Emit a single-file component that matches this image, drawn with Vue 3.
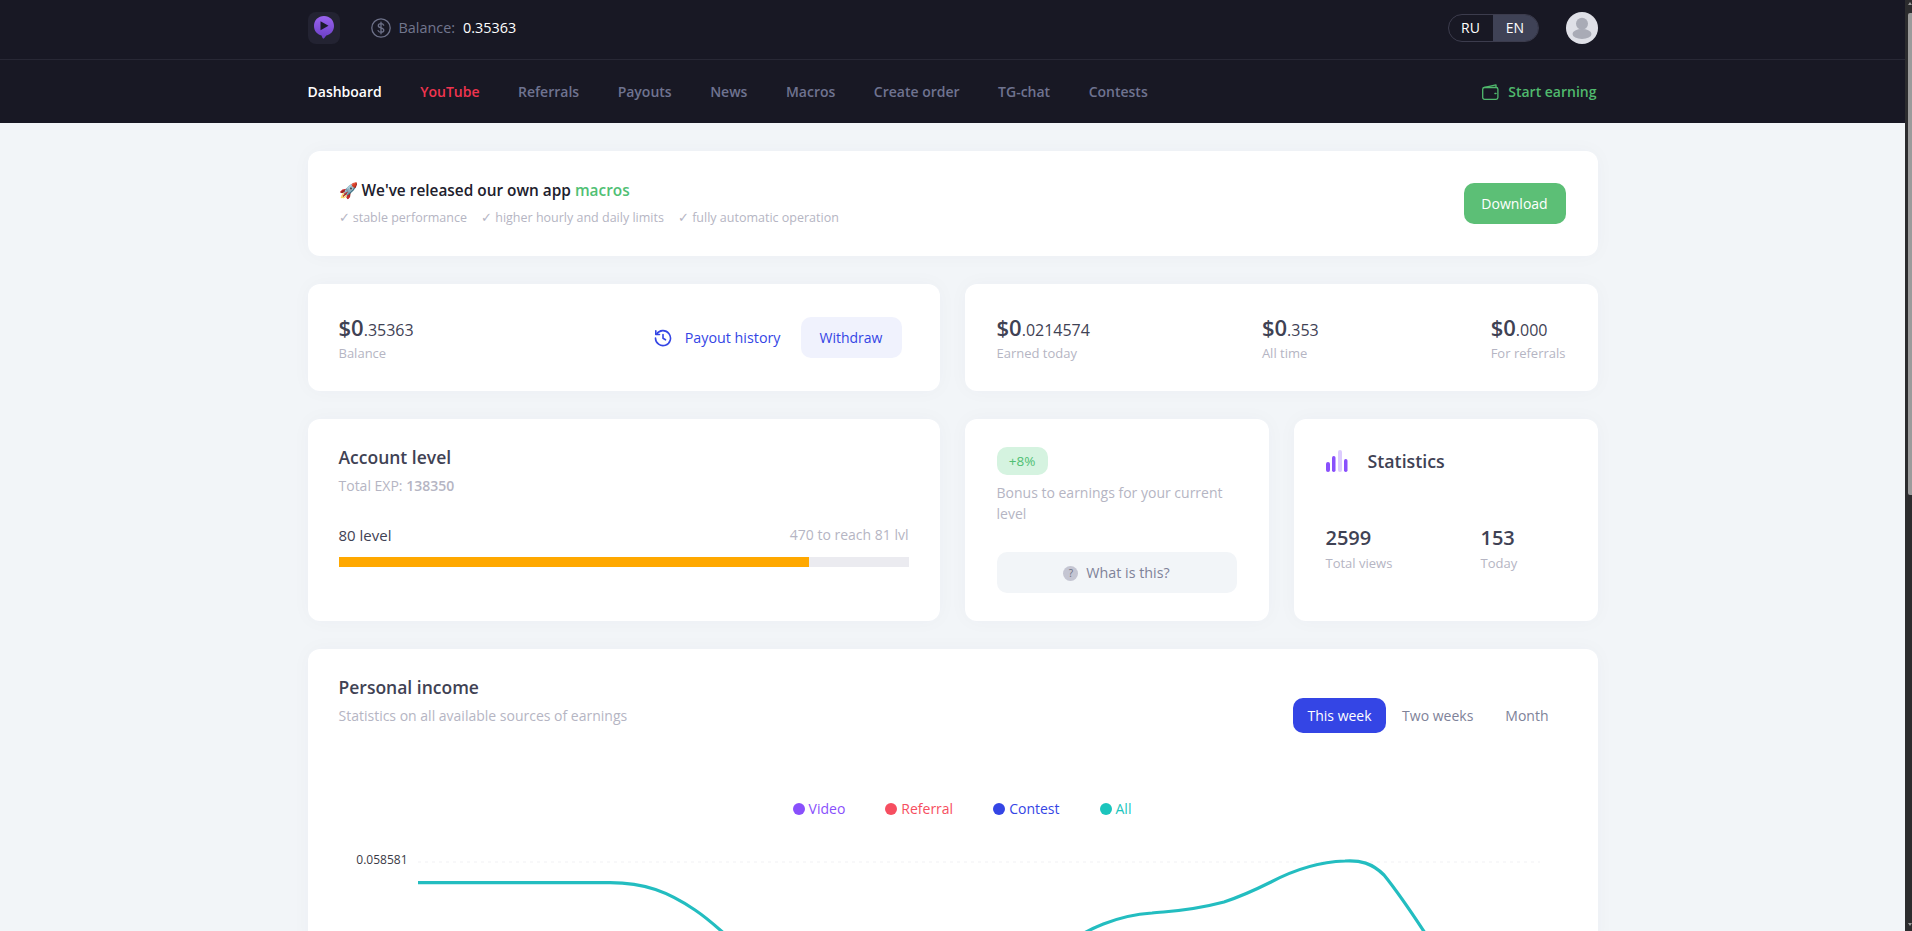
<script setup>
const navItems = ["Dashboard", "YouTube", "Referrals", "Payouts", "News", "Macros", "Create order", "TG-chat", "Contests"]
const perks = ["stable performance", "higher hourly and daily limits", "fully automatic operation"]
const earnings = [
  { whole: "$0", rest: ".0214574", label: "Earned today" },
  { whole: "$0", rest: ".353", label: "All time" },
  { whole: "$0", rest: ".000", label: "For referrals" },
]
const legend = [
  { name: "Video", color: "#8950fc" },
  { name: "Referral", color: "#f64e60" },
  { name: "Contest", color: "#3445e5" },
  { name: "All", color: "#1bc5bd" },
]
const ranges = ["This week", "Two weeks", "Month"]
</script>

<template>
  <div class="page">
    <div class="view">
      <header class="header">
        <div class="top-bar">
          <div class="wrap top-inner">
            <div class="logo">
              <svg width="22" height="25" viewBox="0 0 22 25">
                <defs>
                  <linearGradient id="logoFill" x1="0" y1="0" x2="0" y2="1">
                    <stop offset="0" stop-color="#9a63ee" />
                    <stop offset="1" stop-color="#6a3fc4" />
                  </linearGradient>
                </defs>
                <path d="M11 1C5.200 1 1 5.300 1 11c0 5 3.200 8.300 7.500 9.600.6 1.200.8 2.600 1.600 3 1 .4 2-1.700 3.200-3C18 19.400 21 15.800 21 11 21 5.300 16.800 1 11 1Z" fill="url(#logoFill)" />
                <path d="M7.500 6.300v9L15.500 10.800Z" fill="#1c1b2b" />
              </svg>
            </div>
            <div class="balance">
              <svg class="coin" width="20" height="20" viewBox="0 0 20 20" fill="none" stroke="#6d7189" stroke-width="1.300">
                <circle cx="10" cy="10" r="9.200" />
                <path d="M12.700 7.200C12.300 6.200 11.300 5.700 10 5.700c-1.500 0-2.700.7-2.700 2.100 0 2.900 5.500 1.400 5.500 4.400 0 1.400-1.300 2.100-2.800 2.100-1.400 0-2.500-.6-2.900-1.700M10 4.200v11.600" stroke-linecap="round" />
              </svg>
              <span class="balance-label">Balance:</span>
              <span class="balance-value">0.35363</span>
            </div>
            <div class="lang">
              <span class="lang-item">RU</span>
              <span class="lang-item lang-on">EN</span>
            </div>
            <div class="avatar">
              <svg width="32" height="32" viewBox="0 0 32 32">
                <circle cx="16" cy="11.700" r="6" fill="#a9abb6" />
                <ellipse cx="16" cy="22" rx="9.500" ry="5" fill="#a9abb6" />
              </svg>
            </div>
          </div>
        </div>
        <nav class="nav-bar">
          <div class="wrap nav-inner">
            <a v-for="(item, i) in navItems" :key="item" class="nav-link" :class="{ 'nav-home': i === 0, 'nav-yt': i === 1 }">{{ item }}</a>
            <a class="earn">
              <svg width="17" height="16" viewBox="0 0 17 16" fill="none" stroke="#50b96d" stroke-width="1.300" stroke-linejoin="round">
                <rect x=".7" y="3.500" width="15.200" height="11.800" rx="1.800" />
                <path d="M1.500 3.700 14 .8v2.700" />
                <path d="M13 9.500h1" stroke-linecap="round" stroke-width="1.500" />
              </svg>
              Start earning
            </a>
          </div>
        </nav>
      </header>

      <main class="wrap content">
        <section class="card banner">
          <div>
            <div class="banner-title">🚀 We've released our own app <span class="green">macros</span></div>
            <div class="perks">
              <span v-for="p in perks" :key="p">✓ {{ p }}</span>
            </div>
          </div>
          <button class="download">Download</button>
        </section>

        <div class="row-two">
          <section class="card money-card">
            <div>
              <div class="amount">$0<small>.35363</small></div>
              <div class="muted-sm">Balance</div>
            </div>
            <div class="money-actions">
              <span class="history">
                <svg width="18" height="18" viewBox="0 0 18 18" fill="none" stroke="#3445e5" stroke-width="1.600" stroke-linecap="round" stroke-linejoin="round">
                  <path d="M2.600 5.200A7.500 7.500 0 1 1 1.500 9" />
                  <path d="M1.800 1.800v3.700h3.700" />
                  <path d="M9 5.500V9.300l2.500 1.500" />
                </svg>
                Payout history
              </span>
              <button class="withdraw">Withdraw</button>
            </div>
          </section>
          <section class="card money-card money-right">
            <div v-for="e in earnings" :key="e.label">
              <div class="amount">{{ e.whole }}<small>{{ e.rest }}</small></div>
              <div class="muted-sm">{{ e.label }}</div>
            </div>
          </section>
        </div>

        <div class="row-three">
          <section class="card level-card">
            <h3 class="card-title">Account level</h3>
            <div class="exp">Total EXP: <b>138350</b></div>
            <div class="level-row">
              <span class="level-now">80 level</span>
              <span class="level-next">470 to reach 81 lvl</span>
            </div>
            <div class="bar"><div class="bar-fill" /></div>
          </section>
          <section class="card bonus-card">
            <span class="pill">+8%</span>
            <p class="bonus-text">Bonus to earnings for your current level</p>
            <button class="what">
              <span class="what-icon">?</span>
              What is this?
            </button>
          </section>
          <section class="card stats-card">
            <div class="stats-head">
              <svg width="22" height="22" viewBox="0 0 22 22">
                <rect x="0" y="12" width="4" height="10" rx="2" fill="#8950fc" />
                <rect x="6" y="6" width="3.500" height="16" rx="1.700" fill="#8950fc" />
                <rect x="12" y="0" width="4" height="22" rx="2" fill="#dccbfe" />
                <rect x="18" y="9" width="3.500" height="13" rx="1.700" fill="#8950fc" />
              </svg>
              <h3 class="card-title">Statistics</h3>
            </div>
            <div class="stats-nums">
              <div>
                <div class="stat-num">2599</div>
                <div class="muted-sm">Total views</div>
              </div>
              <div>
                <div class="stat-num">153</div>
                <div class="muted-sm">Today</div>
              </div>
            </div>
          </section>
        </div>

        <section class="card income">
          <div class="income-head">
            <div>
              <h3 class="card-title">Personal income</h3>
              <div class="income-sub">Statistics on all available sources of earnings</div>
            </div>
            <div class="ranges">
              <span v-for="(r, i) in ranges" :key="r" class="range" :class="{ 'range-on': i === 0 }">{{ r }}</span>
            </div>
          </div>
          <div class="legend">
            <span v-for="l in legend" :key="l.name" class="legend-item" :style="{ color: l.color }">
              <i class="dot" :style="{ background: l.color }" />{{ l.name }}
            </span>
          </div>
          <div class="chart">
            <div class="axis">
              <span>0.058581</span>
              <span>0.046865</span>
            </div>
            <svg class="plot" width="1122" height="100" viewBox="418 840 1122 100" fill="none">
              <path d="M418 862H1540" stroke="#f1f1f4" stroke-width="1" stroke-dasharray="3 4" />
              <path d="M418 882.700H610C645 882.700 668 892 695 910 710 920 722 931 742 950M1060 950C1085 928 1120 915 1152 913 1172 911 1190 911 1224 902 1242 896 1255 890 1271 882 1290 872 1315 862 1345 861 1360 860 1372 863 1384 875 1401 896 1420 925 1436 950" stroke="#23bdc0" stroke-width="3.200" />
            </svg>
          </div>
        </section>
      </main>
    </div>
    <div class="scroll-track">
      <i class="arrow-up" />
      <div class="scroll-thumb" />
      <i class="arrow-down" />
    </div>
  </div>
</template>

<style>
html, body {
  margin: 0;
  height: 931px;
  overflow: hidden;
  background: #f2f5f8;
}
</style>

<style scoped>
.page {
  display: flex;
  height: 931px;
  width: 1912px;
  overflow: hidden;
  background: #f2f5f8;
  font-family: "Open Sans", "Noto Sans", sans-serif;
  color: #2f2f3f;
}
.view {
  flex: 1;
  min-width: 0;
}
.scroll-track {
  width: 7px;
  background: #2c2c2e;
  padding: 2px 0 5px 3px;
  box-sizing: border-box;
  display: flex;
  flex-direction: column;
  overflow: hidden;
}
.arrow-up {
  border-left: 2px solid transparent;
  border-right: 2px solid transparent;
  border-bottom: 3px solid #9b9b9b;
  width: 0;
}
.arrow-down {
  margin-top: auto;
  border-left: 2px solid transparent;
  border-right: 2px solid transparent;
  border-top: 3px solid #9b9b9b;
  width: 0;
}
.scroll-thumb {
  margin-top: 8px;
  height: 482px;
  background: #9b9b9b;
  border-radius: 2px 0 0 2px;
}
.wrap {
  width: 1290px;
  margin: 0 auto;
  box-sizing: border-box;
}
.header {
  background: #181824;
}
.top-bar {
  height: 59px;
  border-bottom: 1px solid #282835;
}
.top-inner {
  display: flex;
  align-items: center;
  height: 100%;
  padding-bottom: 4px;
  box-sizing: border-box;
}
.logo {
  width: 32px;
  height: 32px;
  border-radius: 8px;
  background: #232332;
  display: flex;
  align-items: center;
  justify-content: center;
}
.balance {
  display: flex;
  align-items: center;
  margin-left: 31px;
  font-size: 14.400px;
  font-weight: 500;
}
.coin {
  margin-right: 8px;
}
.balance-label {
  color: #72768e;
}
.balance-value {
  color: #fff;
  margin-left: 8px;
}
.lang {
  margin-left: auto;
  margin-right: 27px;
  display: flex;
  height: 28px;
  border: 1px solid #3c3c4d;
  border-radius: 14px;
  overflow: hidden;
  box-sizing: border-box;
  font-size: 14px;
  color: #fff;
}
.lang-item {
  width: 44px;
  display: flex;
  align-items: center;
  justify-content: center;
}
.lang-on {
  background: #3f4256;
  width: 45px;
}
.avatar {
  width: 32px;
  height: 32px;
  border-radius: 50%;
  background: #dfe0e7;
  overflow: hidden;
}
.nav-bar {
  height: 63px;
}
.nav-inner {
  display: flex;
  align-items: center;
  height: 100%;
  gap: 38.500px;
  font-size: 14px;
  font-weight: 600;
}
.nav-link {
  color: #6f7390;
}
.nav-home {
  color: #fff;
}
.nav-yt {
  color: #f0344f;
}
.earn {
  margin-left: auto;
  display: flex;
  align-items: center;
  gap: 9px;
  color: #50b96d;
  margin-right: 1px;
}
.content {
  padding-top: 28px;
  display: flex;
  flex-direction: column;
  gap: 28px;
}
.card {
  background: #fff;
  border-radius: 12px;
  box-shadow: 0 0 20px rgba(60, 70, 110, 0.03);
  box-sizing: border-box;
}
.banner {
  height: 105px;
  padding: 0 32px 0 31px;
  display: flex;
  align-items: center;
  justify-content: space-between;
}
.banner > div {
  margin-top: 2px;
}
.banner-title {
  font-size: 15.400px;
  font-weight: 600;
  color: #20202c;
  line-height: 20px;
}
.green {
  color: #50bf74;
}
.perks {
  display: flex;
  gap: 14px;
  margin-top: 7px;
  font-size: 12.500px;
  line-height: 20px;
  color: #b5b5c3;
}
.download {
  width: 102px;
  height: 41px;
  border: 0;
  border-radius: 10px;
  background: #5cbf76;
  color: #fff;
  font: 500 14px "Open Sans", sans-serif;
}
.row-two {
  display: grid;
  grid-template-columns: 632px 633px;
  gap: 25px;
}
.money-card {
  height: 107px;
  padding: 0 32px 0 31px;
  display: flex;
  align-items: center;
  justify-content: space-between;
}
.money-right {
  padding-left: 32px;
}
.amount {
  font-size: 22px;
  font-weight: 600;
  line-height: 30px;
  color: #3f4254;
}
.amount small {
  font-size: 16px;
  font-weight: 400;
}
.muted-sm {
  font-size: 13px;
  line-height: 20px;
  color: #b5b5c3;
  margin-top: -2px;
}
.money-actions {
  display: flex;
  align-items: center;
  margin-right: 6px;
}
.history {
  display: flex;
  align-items: center;
  gap: 13px;
  color: #3445e5;
  font-size: 14.300px;
  font-weight: 500;
}
.withdraw {
  margin-left: 20px;
  width: 101px;
  height: 41px;
  border: 0;
  border-radius: 10px;
  background: #f0f2fd;
  color: #3445e5;
  font: 500 14px "Open Sans", sans-serif;
}
.row-three {
  display: grid;
  grid-template-columns: 632px 304px 304px;
  gap: 25px;
}
.row-three .card {
  height: 202px;
}
.card-title {
  margin: 0;
  font-size: 17.500px;
  font-weight: 600;
  line-height: 24px;
  color: #3f4254;
}
.level-card {
  padding: 26px 31px 0;
}
.exp {
  margin-top: 7px;
  font-size: 14px;
  line-height: 20px;
  color: #b5b5c3;
}
.exp b {
  font-weight: 600;
}
.level-row {
  margin-top: 29px;
  display: flex;
  justify-content: space-between;
  align-items: center;
  font-size: 14px;
  line-height: 20px;
}
.level-now {
  font-size: 15px;
  font-weight: 500;
  color: #3f4254;
}
.level-next {
  color: #b5b5c3;
}
.bar {
  margin-top: 12px;
  height: 10px;
  background: #ebebf0;
}
.bar-fill {
  width: 82.500%;
  height: 100%;
  background: #ffa800;
}
.bonus-card {
  padding: 28px 32px 0;
}
.pill {
  display: inline-block;
  width: 51px;
  height: 28px;
  line-height: 28px;
  text-align: center;
  border-radius: 10px;
  background: #d5f3e0;
  color: #50bf74;
  font-size: 13.500px;
  font-weight: 500;
}
.bonus-text {
  margin: 7px 0 0;
  font-size: 14px;
  line-height: 21px;
  color: #b5b5c3;
}
.what {
  margin-top: 28px;
  width: 100%;
  height: 41px;
  border: 0;
  border-radius: 10px;
  background: #f2f5f8;
  color: #7e8299;
  font: 500 14.300px "Open Sans", sans-serif;
  display: flex;
  align-items: center;
  justify-content: center;
  gap: 8px;
}
.what-icon {
  width: 15px;
  height: 15px;
  border-radius: 50%;
  background: #c4c5d2;
  color: #6d7080;
  font-size: 10px;
  line-height: 15px;
  margin-top: 2px;
}
.stats-card {
  padding: 30px 32px 0;
}
.stats-head {
  display: flex;
  align-items: center;
  gap: 20px;
}
.stats-head .card-title {
  font-size: 17.800px;
}
.stats-nums {
  margin-top: 52px;
  display: grid;
  grid-template-columns: 155px 1fr;
}
.stat-num {
  font-size: 20px;
  font-weight: 600;
  line-height: 26px;
  color: #3f4254;
}
.stats-nums .muted-sm {
  margin-top: 2px;
}
.income {
  height: 300px;
  padding: 26px 32px 0 31px;
}
.income-head {
  display: flex;
  justify-content: space-between;
}
.income-sub {
  margin-top: 7px;
  font-size: 14px;
  line-height: 20px;
  color: #b5b5c3;
}
.ranges {
  display: flex;
  align-items: center;
  margin-top: 23px;
  height: 35px;
  font-size: 14px;
  color: #7e8299;
  margin-right: 1px;
}
.range {
  padding: 0 16px;
  height: 35px;
  line-height: 35px;
  border-radius: 10px;
}
.range-on {
  padding: 0 14.500px;
  background: #3445e5;
  color: #fff;
  font-weight: 500;
}
.legend {
  margin-top: 66px;
  display: flex;
  justify-content: center;
  gap: 40px;
  font-size: 14px;
  line-height: 20px;
  padding-left: 20px;
}
.legend-item {
  display: flex;
  align-items: center;
}
.dot {
  width: 12px;
  height: 12px;
  border-radius: 50%;
  margin-right: 4px;
}
.chart {
  margin-top: 21px;
  display: flex;
}
.axis {
  width: 79px;
  flex: none;
  display: flex;
  flex-direction: column;
  gap: 61px;
  padding-top: 12px;
  text-align: right;
  font-size: 12px;
  line-height: 16px;
  color: #3a3a46;
  box-sizing: border-box;
}
.axis span {
  display: block;
  padding-right: 10px;
}
.plot {
  display: block;
  overflow: visible;
}
</style>
